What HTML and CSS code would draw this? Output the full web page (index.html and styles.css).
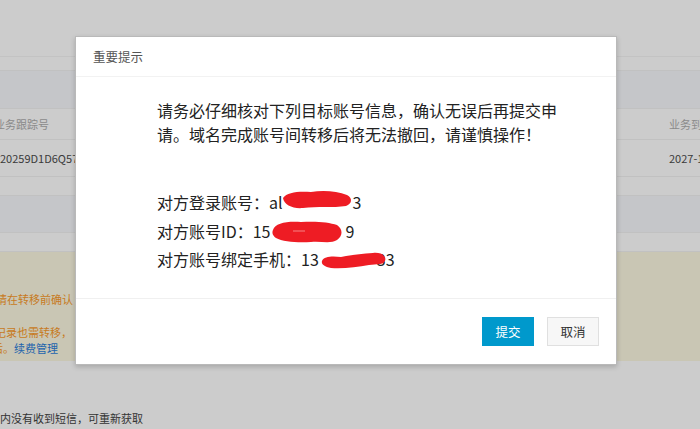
FILE: index.html
```html
<!DOCTYPE html>
<html lang="zh-CN">
<head>
<meta charset="utf-8">
<title>重要提示</title>
<link rel="stylesheet" href="styles.css">
</head>
<body>
<div class="page">
  <div class="topbar"></div>
  <div class="band band-a"></div>
  <div class="band band-dark"></div>
  <div class="trow trow-head">
    <span class="cell cell-left">业务跟踪号</span>
    <span class="cell cell-right">业务到期时间</span>
  </div>
  <div class="trow trow-data">
    <span class="cell cell-left dark">20259D1D6Q57</span>
    <span class="cell cell-right dark">2027-10-12</span>
  </div>
  <div class="band band-b"></div>
  <div class="band band-dark2"></div>
  <div class="band band-b"></div>
  <div class="notice">
    <p class="n1">请在转移前确认</p>
    <p class="n2">记录也需转移，</p>
    <p class="n3">后。<a class="link">续费管理</a></p>
  </div>
  <p class="sms">内没有收到短信，可重新获取</p>
</div>

<div class="modal">
  <div class="modal-head">重要提示</div>
  <div class="modal-body">
    <p class="warn">请务必仔细核对下列目标账号信息，确认无误后再提交申请。域名完成账号间转移后将无法撤回，请谨慎操作！</p>
    <div class="info">
      <p>对方登录账号：al<span class="redact r1"><svg viewBox="0 0 72 20" width="72" height="20"><path d="M2 9 C6 3 18 2 30 3 C42 1 56 2 66 6 C72 9 71 15 65 17 C52 19 36 17 22 19 C12 20 3 16 2 9 Z" fill="#ee1c24"/></svg></span>3</p>
      <p>对方账号ID：15<span class="redact r2"><svg viewBox="0 0 72 24" width="72" height="24"><path d="M2 10 C4 3 16 1 30 2 C44 1 58 2 66 5 C72 9 72 16 66 20 C60 24 50 21 40 22 C28 23 12 22 5 18 C1 15 1 12 2 10 Z" fill="#ee1c24"/><path d="M22 11 L34 11" stroke="#f6a0a0" stroke-width="0.8"/></svg></span>9</p>
      <p>对方账号绑定手机：13<span class="redact r3"><svg viewBox="0 0 66 18" width="66" height="18"><path d="M1 9 C3 4 12 4 20 5 C30 3 40 2 52 1 C60 0 66 4 64 9 C62 13 56 12 48 13 C36 15 22 17 10 16 C3 15 0 12 1 9 Z" fill="#ee1c24"/></svg></span>33</p>
    </div>
  </div>
  <div class="modal-foot">
    <button class="btn btn-primary" type="button">提交</button>
    <button class="btn btn-default" type="button">取消</button>
  </div>
</div>
</body>
</html>
```

FILE: styles.css
```css
html, body {
  margin: 0;
  padding: 0;
}
body {
  width: 700px;
  height: 429px;
  overflow: hidden;
  background: #cccccc;
  font-family: "Noto Sans CJK SC", "Noto Sans", sans-serif;
  position: relative;
}
p { margin: 0; }

.page {
  display: flex;
  flex-direction: column;
}
.topbar {
  height: 56px;
  border-bottom: 1px solid #c3c3c3;
}
.band { border-bottom: 1px solid #c1c1c1; }
.band-a { height: 13px; }
.band-dark { height: 37px; background: #c5c6c9; }
.band-b { height: 18px; }
.band-dark2 { height: 36px; background: #c5c6c9; }

.trow {
  display: flex;
  justify-content: space-between;
  align-items: center;
  border-bottom: 1px solid #c1c1c1;
  font-size: 11px;
  white-space: nowrap;
  overflow: hidden;
}
.trow-head { height: 30px; color: #8a8a8a; }
.trow-data { height: 36px; color: #3a3a3a; }
.cell-left { margin-left: -6px; }
.cell-right { margin-right: -42px; width: 73px; }
.dark { color: #3a3a3a; }
.trow-data .cell-left { margin-left: 0; font-size: 11px; }

.notice {
  height: 109px;
  background: #c9c6b4;
  color: #c77a22;
  font-size: 11px;
  line-height: 16px;
  white-space: nowrap;
}
.notice .n1 { padding-top: 39px; margin-left: -4px; }
.notice .n2 { padding-top: 17px; margin-left: -5px; }
.notice .n3 { margin-left: -8px; }
.link { color: #1d64ad; }

.sms {
  margin-top: 49px;
  font-size: 11px;
  color: #333;
  margin-left: 0;
  white-space: nowrap;
}

/* modal overlays the page */
.modal {
  position: absolute;
  left: 75px;
  top: 36px;
  width: 540px;
  height: 327px;
  background: #fff;
  border: 1px solid #b9b9b9;
  box-shadow: 0 2px 5px rgba(0, 0, 0, 0.18);
  display: flex;
  flex-direction: column;
}
.modal-head {
  height: 39px;
  border-bottom: 1px solid #f2f2f2;
  display: flex;
  align-items: center;
  padding-left: 17px;
  font-size: 12.5px;
  color: #555;
}
.modal-body {
  flex: 1;
  padding: 21px 0 0 81px;
  border-bottom: 1px solid #f0f0f0;
  color: #222;
  font-size: 16px;
}
.warn {
  width: 410px;
  line-height: 24px;
}
.info {
  margin-top: 42px;
  line-height: 28.5px;
  white-space: nowrap;
}
.redact {
  display: inline-block;
  position: relative;
  height: 1em;
  vertical-align: -2px;
}
.redact svg {
  position: absolute;
  left: 0;
  top: 0;
}
.r1 { width: 72px; margin-left: -2px; }
.r1 svg { top: -6px; }
.r2 { width: 74px; margin-left: 1px; }
.r2 svg { top: -4px; }
.r3 { width: 56px; margin-left: 2px; }
.r3 svg { top: 0; }

.modal-foot {
  height: 65px;
  display: flex;
  justify-content: flex-end;
  align-items: center;
  gap: 13px;
  padding-right: 17px;
}
.btn {
  height: 29px;
  width: 52px;
  font-family: inherit;
  font-size: 12.5px;
  padding: 0;
  border-radius: 0;
  cursor: pointer;
}
.btn-primary {
  background: #0099cc;
  border: 1px solid #0099cc;
  color: #fff;
}
.btn-default {
  background: #f7f7f7;
  border: 1px solid #e0e0e0;
  color: #333;
}
```
